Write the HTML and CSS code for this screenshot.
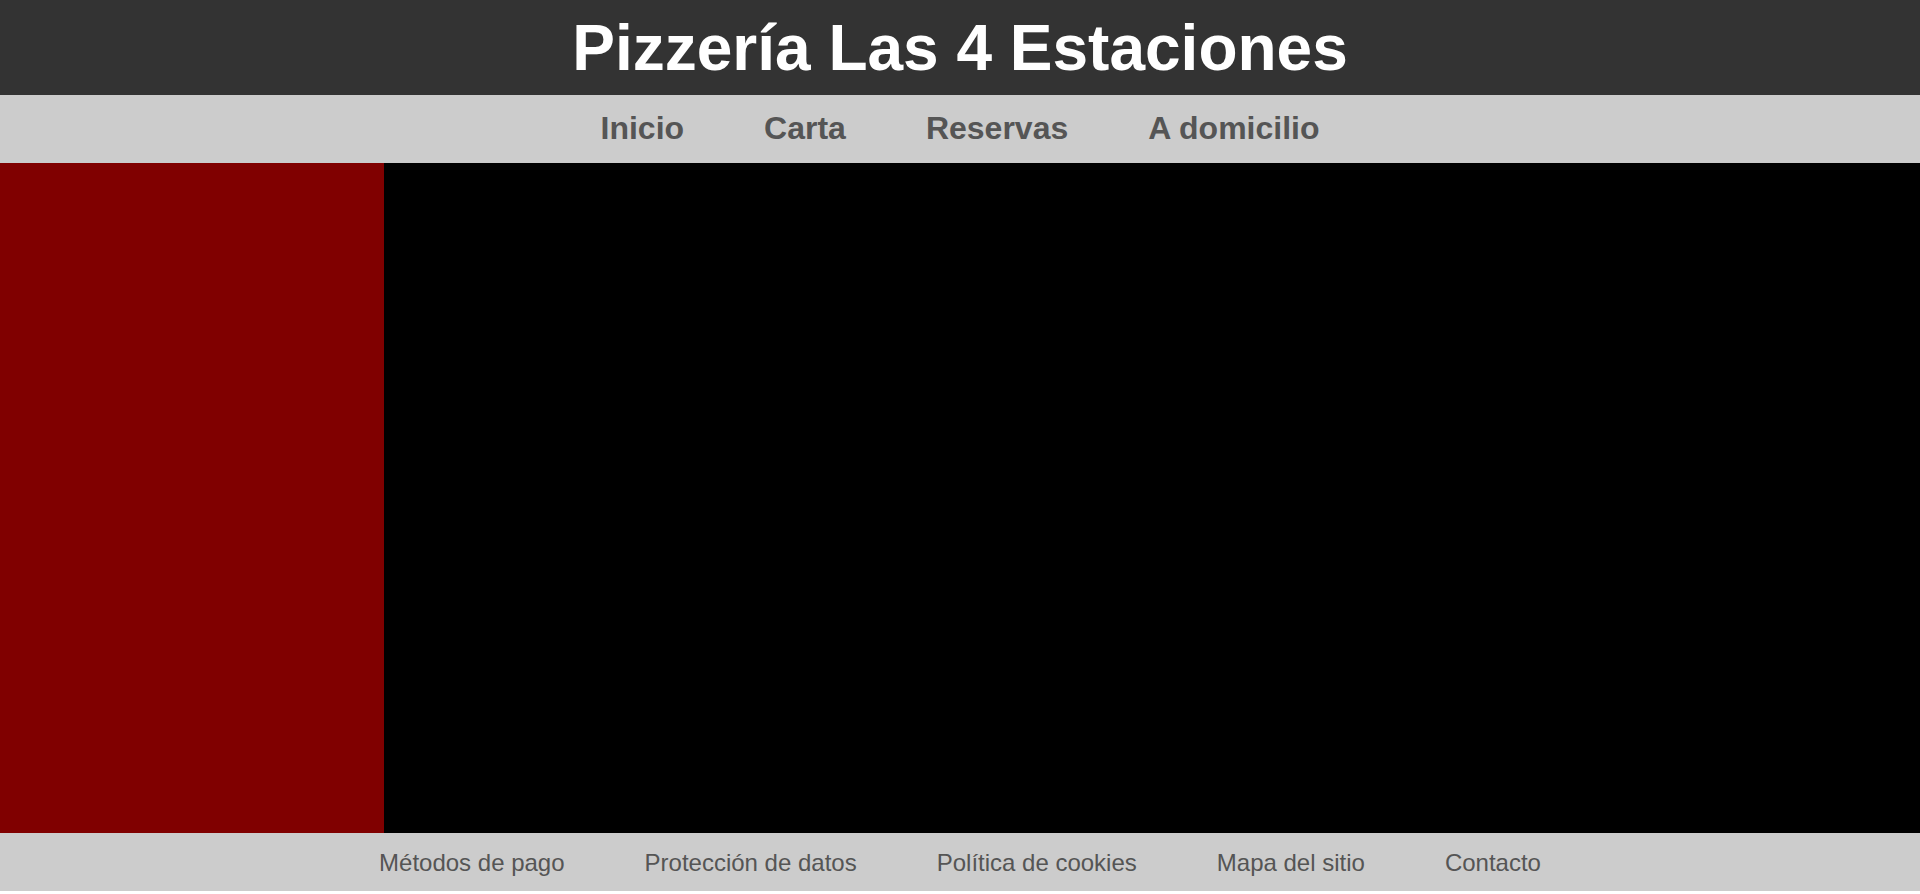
FILE: index.html
```html
<!DOCTYPE html>
<html lang="es">
<head>
<meta charset="utf-8">
<title>Pizzería Las 4 Estaciones</title>
<link rel="stylesheet" href="styles.css">
</head>
<body>
<header class="site-header">
  <h1 class="site-title">Pizzería Las 4 Estaciones</h1>
</header>
<nav class="main-nav">
  <ul class="nav-list">
    <li class="nav-item"><a class="nav-link" href="#">Inicio</a></li>
    <li class="nav-item"><a class="nav-link" href="#">Carta</a></li>
    <li class="nav-item"><a class="nav-link" href="#">Reservas</a></li>
    <li class="nav-item"><a class="nav-link" href="#">A domicilio</a></li>
  </ul>
</nav>
<div class="content">
  <aside class="sidebar"></aside>
  <main class="main-area"></main>
</div>
<footer class="site-footer">
  <ul class="footer-list">
    <li class="footer-item"><a class="footer-link" href="#">Métodos de pago</a></li>
    <li class="footer-item"><a class="footer-link" href="#">Protección de datos</a></li>
    <li class="footer-item"><a class="footer-link" href="#">Política de cookies</a></li>
    <li class="footer-item"><a class="footer-link" href="#">Mapa del sitio</a></li>
    <li class="footer-item"><a class="footer-link" href="#">Contacto</a></li>
  </ul>
</footer>
</body>
</html>
```
FILE: styles.css
```css
* { box-sizing: border-box; }
html, body { margin: 0; padding: 0; }
body {
  font-family: "Liberation Sans", Arial, sans-serif;
  background: #fff;
}
.site-header {
  background: #333333;
  padding: 11px 0 10px;
}
.site-title {
  margin: 0;
  color: #fff;
  font-size: 64px;
  font-weight: bold;
  line-height: 74px;
  text-align: center;
}
.main-nav {
  background: #cccccc;
  padding: 15px 0 16px;
}
.nav-list, .footer-list {
  list-style: none;
  margin: 0;
  padding: 0;
  display: flex;
  justify-content: center;
}
.nav-link {
  display: block;
  padding: 0 40px;
  font-size: 32px;
  font-weight: bold;
  line-height: 37px;
  color: #555555;
  text-decoration: none;
}
.content {
  display: flex;
  height: 670px;
}
.sidebar {
  width: 20%;
  background: #800000;
}
.main-area {
  flex: 1;
  background: #000;
}
.site-footer {
  background: #cccccc;
  padding: 16px 0 14px;
}
.footer-link {
  display: block;
  padding: 0 40px;
  font-size: 24px;
  line-height: 28px;
  color: #555555;
  text-decoration: none;
}
```
